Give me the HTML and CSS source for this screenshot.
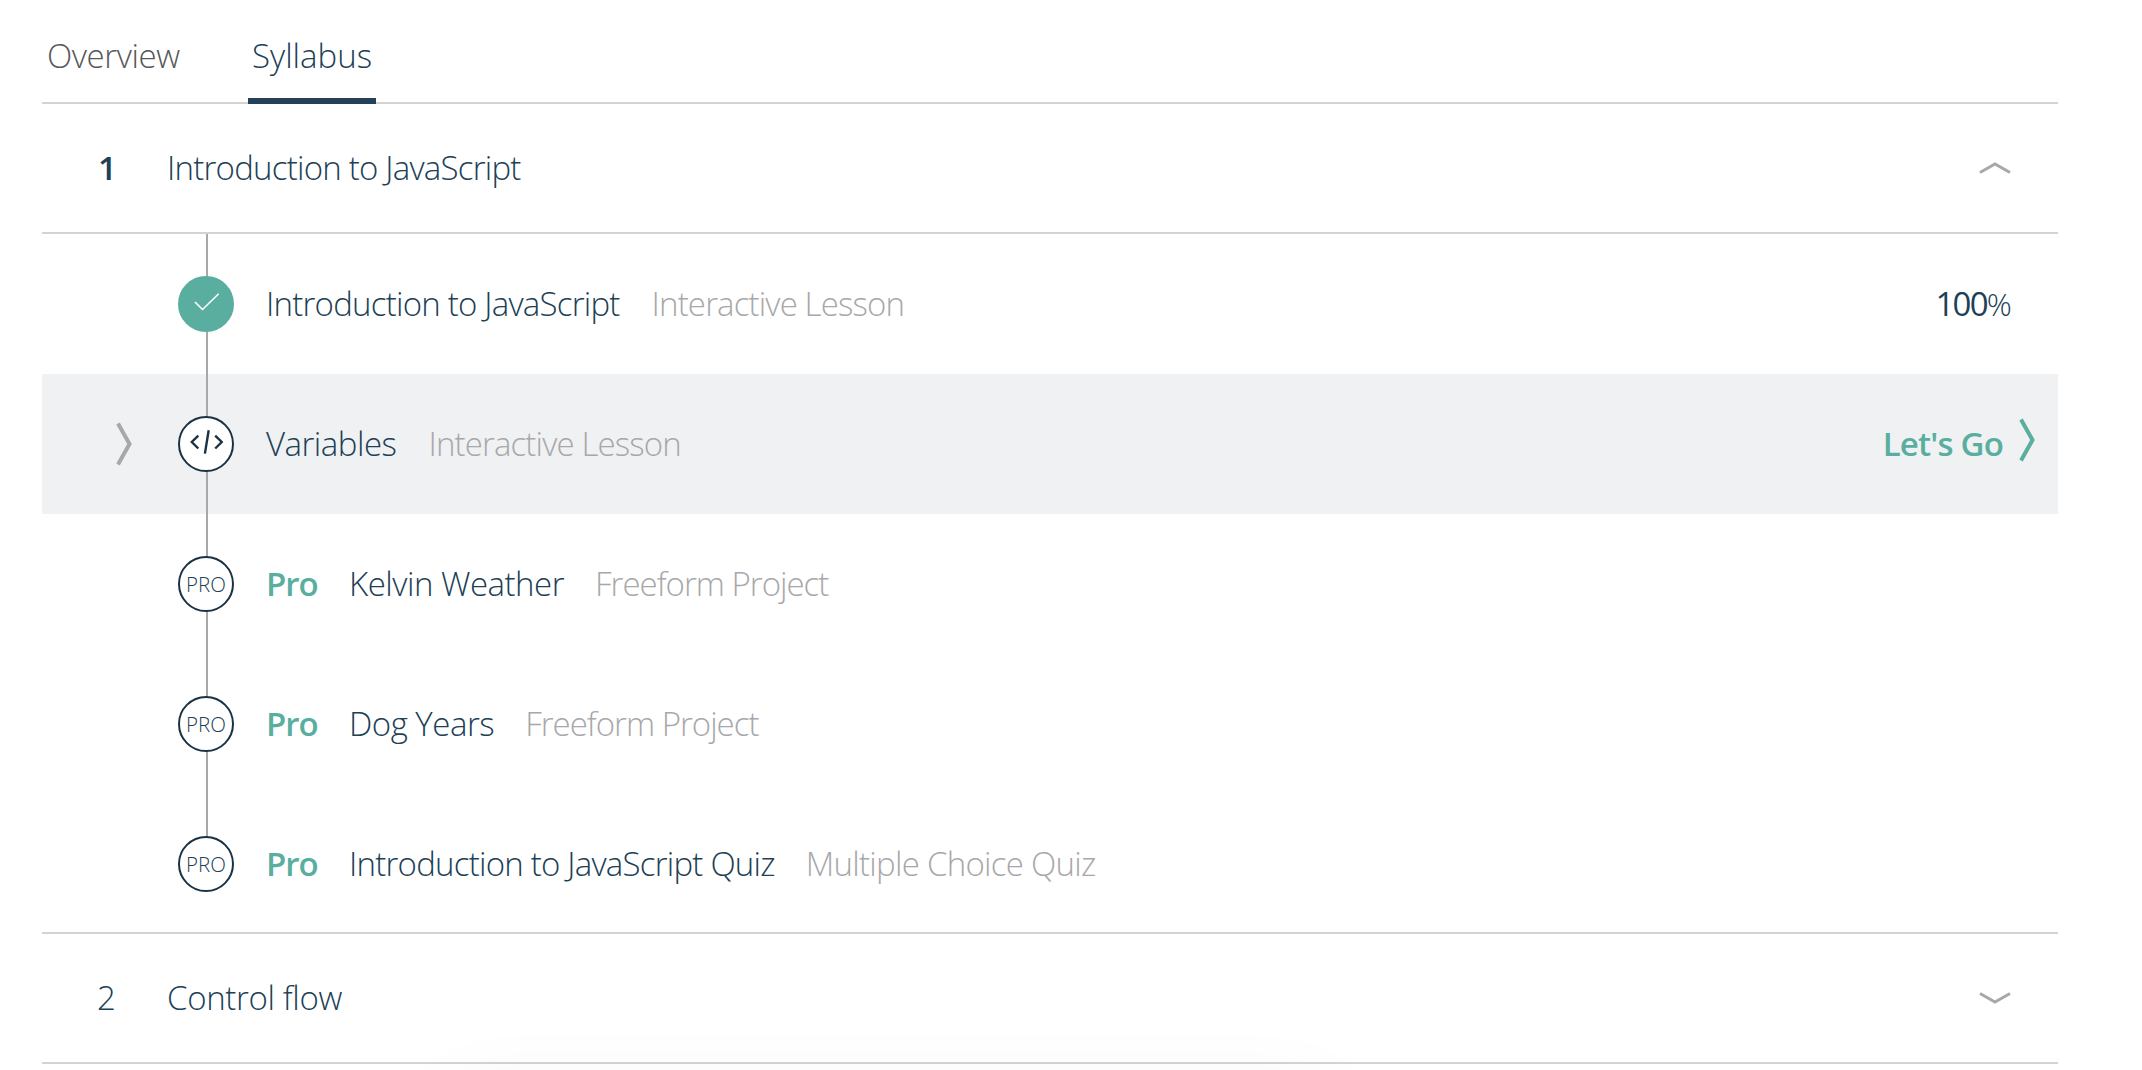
FILE: index.html
```
<!DOCTYPE html>
<html lang="en">
<head>
<meta charset="utf-8">
<title>Syllabus</title>
<link rel="stylesheet" href="styles.css">
</head>
<body>
<main class="course">
  <nav class="tabs">
    <a class="tab overview">Overview</a>
    <a class="tab syllabus active">Syllabus</a>
  </nav>

  <section class="unit">
    <header class="unit-head">
      <span class="number current">1</span>
      <h2 class="unit-title intro">Introduction to JavaScript</h2>
      <svg class="toggle" viewBox="0 0 32 12"><path d="M1 10.5 16 2 31 10.5"/></svg>
    </header>
    <ul class="lessons">
      <li class="lesson">
        <span class="marker"></span>
        <span class="step"><span class="badge done"><svg viewBox="0 0 56 56"><path d="M17 26 24.5 33.5 40.7 17.8"/></svg></span></span>
        <span class="title intro">Introduction to JavaScript</span>
        <span class="kind">Interactive Lesson</span>
        <span class="progress">100<span class="percent">%</span></span>
      </li>
      <li class="lesson selected">
        <span class="marker"><svg viewBox="0 0 16 44"><path d="M2 1.5 13.5 22 2 42.5"/></svg></span>
        <span class="step"><span class="badge code"><svg viewBox="0 0 56 56"><path d="M20.3 19.7 13.8 26 20.3 32.5M30.7 14.2 26.9 37.6M37.2 19.7 43.7 26 37.2 32.5"/></svg></span></span>
        <span class="title">Variables</span>
        <span class="kind">Interactive Lesson</span>
        <a class="go">Let's Go<svg viewBox="0 0 16 44"><path d="M2 1.5 13.5 22 2 42.5"/></svg></a>
      </li>
      <li class="lesson">
        <span class="marker"></span>
        <span class="step"><span class="badge">PRO</span></span>
        <span class="pro">Pro</span>
        <span class="title">Kelvin Weather</span>
        <span class="kind freeform">Freeform Project</span>
      </li>
      <li class="lesson">
        <span class="marker"></span>
        <span class="step"><span class="badge">PRO</span></span>
        <span class="pro">Pro</span>
        <span class="title">Dog Years</span>
        <span class="kind freeform">Freeform Project</span>
      </li>
      <li class="lesson">
        <span class="marker"></span>
        <span class="step last"><span class="badge">PRO</span></span>
        <span class="pro">Pro</span>
        <span class="title intro">Introduction to JavaScript Quiz</span>
        <span class="kind quiz">Multiple Choice Quiz</span>
      </li>
    </ul>
  </section>

  <section class="unit">
    <header class="unit-head">
      <span class="number">2</span>
      <h2 class="unit-title">Control flow</h2>
      <svg class="toggle" viewBox="0 0 32 12"><path d="M1 1.5 16 10 31 1.5"/></svg>
    </header>
  </section>
</main>
<div class="dock"></div>
</body>
</html>
```
FILE: styles.css
```
* {
  box-sizing: border-box;
}

body {
  margin: 0;
  height: 1070px;
  overflow: hidden;
  background: #fff;
  color: #204056;
  font: 300 33px/44px "Open Sans", "Noto Sans", sans-serif;
  white-space: nowrap;
}

svg {
  display: block;
  fill: none;
  stroke: currentColor;
}

.course {
  width: 2016px;
  margin-left: 42px;
}

.tabs {
  display: flex;
  gap: 64px;
  height: 104px;
  padding-top: 34px;
  border-bottom: 2px solid #d3d3d4;
}

.tab {
  height: 70px;
  padding: 0 4px;
}

.overview {
  width: 142px;
  padding-left: 5px;
  color: #57585a;
  letter-spacing: -0.4px;
}

.syllabus {
  width: 128px;
}

.active {
  border-bottom: 6px solid #264055;
}

.unit-head {
  display: flex;
  align-items: center;
  height: 130px;
  padding: 0 47px 0 55px;
  border-bottom: 2px solid #d3d3d4;
}

.number {
  width: 70px;
}

.number.current {
  padding-left: 1px;
  font-weight: 600;
}

.unit-title {
  flex: 1;
  margin: 0;
  font-size: inherit;
  font-weight: 300;
  letter-spacing: -0.35px;
}

.intro.intro {
  letter-spacing: -0.77px;
}

.toggle {
  width: 32px;
  height: 12px;
  color: #a8a8aa;
  stroke-width: 3;
}

.lessons {
  margin: 0;
  padding: 0;
  list-style: none;
  border-bottom: 2px solid #d3d3d4;
}

.lesson {
  display: flex;
  align-items: center;
  height: 140px;
}

.lesson:last-child {
  height: 138px;
}

.selected {
  background: #f0f1f3;
}

.marker {
  width: 136px;
  padding-left: 74px;
  color: #a8a8aa;
}

.marker svg,
.go svg {
  width: 16px;
  height: 44px;
  stroke-width: 4;
}

.step {
  display: flex;
  align-items: center;
  align-self: stretch;
  width: 88px;
  background: linear-gradient(#a8a8aa, #a8a8aa) 28px 0 / 2px 100% no-repeat;
}

.step.last {
  background-size: 2px 50%;
  padding-top: 2px;
}

.badge {
  display: flex;
  align-items: center;
  justify-content: center;
  width: 56px;
  height: 56px;
  border: 2px solid #1b3244;
  border-radius: 50%;
  background: #fff;
  color: #204056;
  font-size: 20.5px;
}

.badge svg {
  flex: none;
  width: 56px;
  height: 56px;
}

.done {
  border-color: #59ae9f;
  background: #59ae9f;
  color: #fff;
  stroke-width: 1.6;
}

.code {
  color: #1b3244;
  stroke-width: 2.4;
}

.lesson:last-child .title,
.lesson:last-child .kind,
.lesson:last-child .pro {
  padding-top: 2px;
}

.title {
  margin-right: 32px;
  letter-spacing: -0.5px;
}

.kind {
  color: #a8a8aa;
  letter-spacing: -0.86px;
}

.freeform {
  margin-left: -1px;
  letter-spacing: -1px;
}

.quiz {
  margin-left: -1px;
  letter-spacing: -0.72px;
}

.pro {
  width: 83px;
  color: #59ae9f;
  font-weight: 600;
  letter-spacing: -1px;
}

.progress {
  margin-left: auto;
  padding-right: 48px;
  font-weight: 400;
  letter-spacing: -1.8px;
}

.percent {
  font-size: 31px;
  font-weight: 300;
}

.go {
  display: flex;
  align-items: center;
  gap: 16px;
  margin-left: auto;
  padding-right: 23px;
  color: #59ae9f;
  font-weight: 600;
  letter-spacing: -0.8px;
}

.go svg {
  margin-bottom: 8px;
}

/* Bar docked below the fold; only its soft shadow reaches the page. */
.dock {
  position: fixed;
  top: 1100px;
  left: 450px;
  width: 880px;
  height: 60px;
  box-shadow: 0 0 90px rgba(0, 0, 0, 0.06);
}
```
